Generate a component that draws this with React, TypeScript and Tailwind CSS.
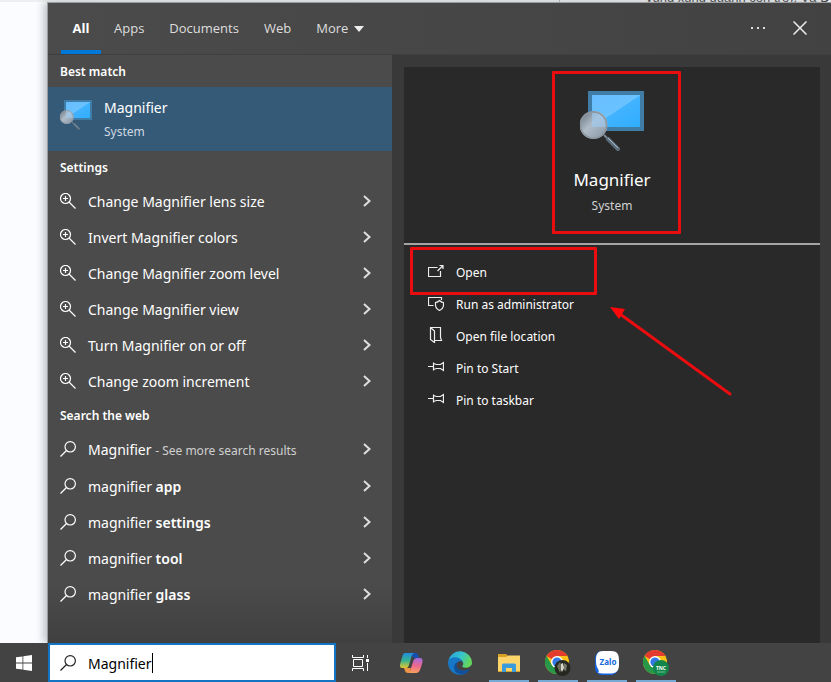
import type { ReactNode } from 'react';

const settings = [
  'Change Magnifier lens size',
  'Invert Magnifier colors',
  'Change Magnifier zoom level',
  'Change Magnifier view',
  'Turn Magnifier on or off',
  'Change zoom increment',
];

const suggestions = ['app', 'settings', 'tool', 'glass'];

function MonitorIcon({ className, id }: { className: string; id: string }) {
  return (
    <svg viewBox="0 0 64 60" className={className} aria-hidden="true">
      <defs>
        <linearGradient id={`${id}-screen`} x1="0" y1="0" x2="1" y2="1">
          <stop offset="0" stopColor="#68bdff" />
          <stop offset="0.5" stopColor="#6ac2ff" />
          <stop offset="0.51" stopColor="#42b3ff" />
          <stop offset="1" stopColor="#2faeff" />
        </linearGradient>
        <linearGradient id={`${id}-lens`} x1="0" y1="0" x2="1" y2="1">
          <stop offset="0" stopColor="#5f6c78" />
          <stop offset="0.45" stopColor="#b0bcc8" />
          <stop offset="1" stopColor="#8494a3" />
        </linearGradient>
      </defs>
      <path d="M8 0H64V40H8Z" fill="#3f7da6" />
      <path d="M12 4H60V36H12Z" fill={`url(#${id}-screen)`} />
      <path d="M24 44L30 50" stroke="#7e8d99" strokeWidth="2" />
      <path d="M28 48L38 58" stroke="#5c6f7e" strokeWidth="4" strokeLinecap="round" />
      <path d="M28 47L38 57" stroke="#a9b8c4" strokeWidth="1" />
      <circle cx="13.500" cy="34" r="14" fill={`url(#${id}-lens)`} />
      <path d="M12 21V36H27A14 14 0 0 0 12 21Z" fill="#9fcdf3" opacity="0.6" />
      <circle cx="13.500" cy="34" r="13" fill="none" stroke="#8d979f" strokeWidth="1.500" />
    </svg>
  );
}

function ZoomInIcon() {
  return (
    <svg viewBox="0 0 16 16" className="size-4 shrink-0" fill="none" stroke="#fff" aria-hidden="true">
      <circle cx="5.500" cy="5.500" r="5" strokeWidth="1.200" />
      <path d="M9 9L15.500 15.500M3 5.500H8M5.500 3V8" strokeWidth="1.200" />
    </svg>
  );
}

function SearchIcon({ stroke = '#fff' }: { stroke?: string }) {
  return (
    <svg viewBox="0 0 16 16" className="size-4 shrink-0" fill="none" stroke={stroke} strokeWidth="1.200" aria-hidden="true">
      <circle cx="10.200" cy="5.800" r="5.200" />
      <path d="M6.500 9.500L0.500 15.500" />
    </svg>
  );
}

function Chevron() {
  return (
    <svg viewBox="0 0 8 12" className="h-3 w-2" fill="none" stroke="#dedede" strokeWidth="2" aria-hidden="true">
      <path d="M1 1L6.500 6L1 11" />
    </svg>
  );
}

function ResultRow({ icon, children }: { icon: ReactNode; children: ReactNode }) {
  return (
    <li>
      <button type="button" className="flex h-9 w-full items-center pr-[21px] pl-3 text-left">
        {icon}
        <span className="ml-3 grow pt-0.5 whitespace-nowrap">{children}</span>
        <Chevron />
      </button>
    </li>
  );
}

function SectionTitle({ children }: { children: ReactNode }) {
  return <h2 className="h-8 pl-3 text-xs leading-[34px] font-semibold">{children}</h2>;
}

const pin = 'M0 7.500H5.500M5.500 3.500V11.500M5.500 4.500L8.500 5.500H12.500L15.500 3.500V11.500L12.500 9.500H8.500L5.500 10.500';

const actions = [
  { label: 'Open', path: 'M9.500 4.500H0.500V13.500H12.500V8M9.500 8L14.500 3M11.500 2.500H15V6' },
  { label: 'Run as administrator', path: 'M5.500 10.500H0.500V2.500H13.500V5M11.500 5.500C10 7 9 7.500 7.500 7.500V10C7.500 13 9.500 14.500 11.500 15.500C13.500 14.500 15.500 13 15.500 10V7.500C14 7.500 13 7 11.500 5.500Z' },
  { label: 'Open file location', path: 'M2.500 0.500H12.500V10.500L13.500 13.500H7M2.500 0.500L6.500 4V15.500L2.500 12.500V0.500Z' },
  { label: 'Pin to Start', path: pin },
  { label: 'Pin to taskbar', path: pin },
];

function ChromeLogo() {
  return (
    <>
      <circle cx="12" cy="12" r="12" fill="#fbc116" />
      <path d="M12 12L1.600 6A12 12 0 0 1 22.400 6H12Z" fill="#e33b2e" />
      <path d="M1.600 6A12 12 0 0 0 12 24L17.200 15L12 12L6.800 15Z" fill="#279847" />
      <circle cx="12" cy="12" r="6" fill="#fff" />
      <circle cx="12" cy="12" r="4.600" fill="#3478e5" />
    </>
  );
}

function TaskButton({ label, active, children }: { label: string; active?: boolean; children: ReactNode }) {
  return (
    <button
      type="button"
      aria-label={label}
      className={`flex h-full w-10 items-center justify-center border-b-2 pt-0.5 ${active ? 'border-[#76a9d3]' : 'border-transparent'}`}
    >
      {children}
    </button>
  );
}

function Taskbar() {
  return (
    <footer className="flex h-[39px] bg-[#434343]">
      <button type="button" aria-label="Start" className="flex w-12 items-center justify-center">
        <svg viewBox="0 0 16 16" className="size-4" fill="#fff" aria-hidden="true">
          <path d="M0 2.300L6.500 1.400V7.500H0ZM7.300 1.300L16 0V7.500H7.300ZM0 8.400H6.500V14.600L0 13.700ZM7.300 8.400H16V16L7.300 14.700Z" />
        </svg>
      </button>
      <label className="flex w-72 items-center border-2 border-[#1474c4] bg-white pl-2.5">
        <SearchIcon stroke="#222" />
        <input
          aria-label="Search"
          defaultValue="Magnifier"
          className="ml-3 field-sizing-content bg-transparent pt-0.5 text-sm text-black outline-none"
        />
        <span className="h-5 w-px bg-black" />
      </label>
      <nav aria-label="Taskbar" className="ml-1 flex gap-[9px]">
        <TaskButton label="Task view">
          <svg viewBox="0 0 17 16" className="h-4 w-[17px]" fill="none" stroke="#fff" aria-hidden="true">
            <path d="M0.500 0V2.500H11.500V0M0.500 16V13.500H11.500V16M1.500 4.500H10.500V11.500H1.500ZM15.500 0V3M15.500 8V16" />
            <path d="M14 4H17V7H14Z" fill="#fff" stroke="none" />
          </svg>
        </TaskButton>
        <div className="ml-0.5 flex gap-[9px]">
          <TaskButton label="Copilot">
            <svg viewBox="0 0 24 24" className="size-6" aria-hidden="true">
              <defs>
                <linearGradient id="cp-l" x1="0" y1="0" x2="0" y2="1">
                  <stop offset="0" stopColor="#218edf" />
                  <stop offset="0.5" stopColor="#36b391" />
                  <stop offset="1" stopColor="#e6c72d" />
                </linearGradient>
                <linearGradient id="cp-r" x1="0.500" y1="0" x2="0.400" y2="1">
                  <stop offset="0" stopColor="#a66bdb" />
                  <stop offset="0.500" stopColor="#ee6790" />
                  <stop offset="1" stopColor="#f8a15d" />
                </linearGradient>
              </defs>
              <path d="M12 2H17C19 2 19.500 5 20 7H15L13 5Z" fill="#174fb0" />
              <path d="M6 2H15C13 3 12.500 5 11.500 9L10 14C9 17 8 17 6 17H3C0 17 1 13 2 10L3.500 5C4 3 4.500 2 6 2Z" fill="url(#cp-l)" />
              <path d="M18 7H21C24 7 24 10 23 13L21 19C20 21 19 22 17 22H9C11 21 11.500 19 12 17L14 11C15 8 16 7 18 7Z" fill="url(#cp-r)" />
              <path d="M5 17H10L12 17C11 20 11 22 9 22C6 22 6 19 5 17Z" fill="#ed9445" />
            </svg>
          </TaskButton>
          <TaskButton label="Microsoft Edge">
            <svg viewBox="0 0 24 24" className="size-6" aria-hidden="true">
              <defs>
                <linearGradient id="edge-top" x1="0" y1="0" x2="1" y2="0.400">
                  <stop offset="0" stopColor="#279ed8" />
                  <stop offset="0.550" stopColor="#35c4cf" />
                  <stop offset="1" stopColor="#64d85b" />
                </linearGradient>
              </defs>
              <path d="M0.200 10A12 12 0 0 1 24 12C24 16 18 18 14.500 16C13.500 15 16 14 15 11.500C13 7 5 5 0.200 10Z" fill="url(#edge-top)" />
              <path d="M0 12C0 5 12 4 15 11C11 8 8 12 8 15C8 20 14 23 19 21.500A12 12 0 0 1 0 12Z" fill="#1878c8" />
              <path d="M9.500 11C6 17 12 22 22 18C18 26 7 25 6 17C6 14 7 12 9.500 11Z" fill="#11519c" />
            </svg>
          </TaskButton>
          <TaskButton label="File Explorer" active>
            <svg viewBox="0 0 22 18" className="h-[18px] w-[22px]" aria-hidden="true">
              <path d="M0 0H8L10 2H22V18H0Z" fill="#d9a125" />
              <path d="M0 3H8L10 1.500H22V17H0Z" fill="#fbd56a" />
              <path d="M4 18V11C4 10 5 9.500 6 9.500H16C17 9.500 18 10 18 11V18H14V14H8V18Z" fill="#3a9bdc" />
            </svg>
          </TaskButton>
          <TaskButton label="Google Chrome, first profile" active>
            <svg viewBox="0 0 26 26" className="size-[26px]" aria-hidden="true">
              <ChromeLogo />
              <circle cx="17.500" cy="18" r="8" fill="#252820" />
              <path d="M12 16L15 12L17 16L15 23Z" fill="#6b6d58" />
              <path d="M16 14L18 13L19 18L17 22L16 20Z" fill="#d6d7ca" />
              <path d="M19 13L22 15L21 21L19 20Z" fill="#77796c" />
            </svg>
          </TaskButton>
          <TaskButton label="Zalo" active>
            <svg viewBox="0 0 24 24" className="size-6" aria-hidden="true">
              <rect width="23" height="24" rx="7" fill="#1261df" />
              <path d="M8 0H16C22 0 24 3 24 9V14C24 20 21 22.500 15 22.500H8L3 22C4 21 4 20 3 18C1 15 1 12 1 9C1 3 3 0 8 0Z" fill="#fff" />
              <text x="13" y="14" textAnchor="middle" fontSize="8" fontWeight="700" fill="#1467dd">Zalo</text>
            </svg>
          </TaskButton>
          <TaskButton label="Google Chrome, second profile" active>
            <svg viewBox="0 0 26 26" className="size-[26px]" aria-hidden="true">
              <ChromeLogo />
              <circle cx="18" cy="18" r="8" fill="#12854a" />
              <text x="18" y="19.500" textAnchor="middle" fontSize="5" fontWeight="700" fill="#fff">TNC</text>
              <path d="M14 22H22" stroke="#73bd92" />
            </svg>
          </TaskButton>
        </div>
      </nav>
    </footer>
  );
}

export default function App() {
  return (
    <div className="flex min-h-screen flex-col bg-[#fafcff] font-['Noto_Sans',sans-serif] text-sm text-white">
      <div className="flex h-0.5 justify-end overflow-hidden bg-[#eeeff0] pl-12">
        <div className="flex w-[272px] shrink-0 items-end border-l border-gray-400 pl-[86px] font-['Liberation_Sans',sans-serif] text-[13px] leading-2 whitespace-nowrap text-black">
          vùng xung quanh con trỏ). Và Đ
        </div>
      </div>
      <main className="ml-[47px] flex grow flex-col border-t border-l border-[#9b9c9d] bg-[#4b4b4b] shadow-[-3px_0_8px_#b9bdc2]">
        <header className="flex h-[52px] border-b border-[#404040] bg-linear-to-r from-[#4b4b4b] to-[#424242] font-['Open_Sans',sans-serif] text-[13px] text-[#dedede]">
          <nav aria-label="Search filters" className="flex gap-[25px] pl-[13px]">
            <button type="button" className="-mr-3 w-10 border-b-4 border-[#0078d7] pt-1 font-bold text-white">All</button>
            <button type="button">Apps</button>
            <button type="button">Documents</button>
            <button type="button">Web</button>
            <button type="button" className="flex items-center gap-1.5">
              More
              <svg viewBox="0 0 10 6" className="h-1.5 w-2.5" fill="#eee" aria-hidden="true">
                <path d="M0 0H10L5 6Z" />
              </svg>
            </button>
          </nav>
          <div className="ml-auto flex items-center gap-[26px] pr-6 pb-0.5">
            <button type="button" aria-label="Options">
              <svg viewBox="0 0 16 2" className="h-0.5 w-4" fill="#ddd" aria-hidden="true">
                <path d="M0 0H2V2H0ZM6 0H8V2H6ZM12 0H14V2H12Z" />
              </svg>
            </button>
            <button type="button" aria-label="Close">
              <svg viewBox="0 0 14 14" className="size-3.5" stroke="#eee" strokeWidth="1.500" aria-hidden="true">
                <path d="M0.500 0.500L13.500 13.500M13.500 0.500L0.500 13.500" />
              </svg>
            </button>
          </div>
        </header>
        <div className="flex grow">
          <section aria-label="Results" className="w-[344px] shrink-0 bg-linear-to-b from-[#4b4b4b] from-90% to-[#404040]">
            <SectionTitle>Best match</SectionTitle>
            <button type="button" className="flex h-16 w-full bg-[#355a78] pt-[13px] pl-3 text-left">
              <MonitorIcon className="h-[30px] w-8" id="small" />
              <span className="-mt-1 ml-3">
                <span className="block leading-6">Magnifier</span>
                <span className="block text-xs leading-6 text-[#cfd9e1]">System</span>
              </span>
            </button>
            <SectionTitle>Settings</SectionTitle>
            <ul>
              {settings.map((name) => (
                <ResultRow key={name} icon={<ZoomInIcon />}>{name}</ResultRow>
              ))}
            </ul>
            <SectionTitle>Search the web</SectionTitle>
            <ul className="pb-px">
              <ResultRow icon={<SearchIcon />}>
                Magnifier <span className="text-xs text-[#d0d0d0]">- See more search results</span>
              </ResultRow>
            </ul>
            <ul>
              {suggestions.map((word) => (
                <ResultRow key={word} icon={<SearchIcon />}>
                  magnifier <b className="font-semibold">{word}</b>
                </ResultRow>
              ))}
            </ul>
          </section>
          <div className="grow bg-[#393939] pt-3 pr-[11px] pl-3">
            <section aria-label="Details" className="h-full bg-[#292929]">
              <div className="relative flex h-[178px] flex-col items-center border-b-2 border-[#a4a4a4] pt-6">
                <MonitorIcon className="h-[60px] w-16" id="large" />
                <h1 className="mt-[15px] text-[17px] leading-7">Magnifier</h1>
                <p className="text-xs leading-6 text-[#d0d0d0]">System</p>
                <div className="absolute top-1 left-[148px] h-[163px] w-[129px] rounded-[1px] border-3 border-[#e90d0f]" />
              </div>
              <div className="relative pt-3 text-xs">
                <ul>
                  {actions.map(({ label, path }) => (
                    <li key={label}>
                      <button type="button" className="flex h-8 items-center gap-3 pl-6">
                        <svg viewBox="0 0 16 16" className="mb-1 size-4" fill="none" stroke="#eee" strokeWidth="1.200" aria-hidden="true">
                          <path d={path} />
                        </svg>
                        {label}
                      </button>
                    </li>
                  ))}
                </ul>
                <div className="absolute top-0.5 left-1.5 h-12 w-[187px] rounded-[1px] border-3 border-[#e90d0f]" />
                <svg viewBox="0 0 124 92" className="absolute top-[60px] left-[205px] h-[92px] w-[124px]" aria-hidden="true">
                  <path d="M11 9L121 89" stroke="#e90d0f" strokeWidth="3" strokeLinecap="round" />
                  <path d="M1 2L16 4L10 14Z" fill="#ff080b" />
                </svg>
              </div>
            </section>
          </div>
        </div>
      </main>
      <Taskbar />
    </div>
  );
}
